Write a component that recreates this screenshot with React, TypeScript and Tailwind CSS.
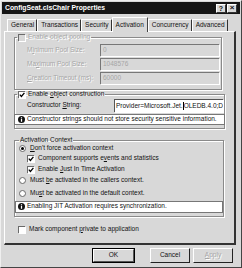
import React from 'react';

function Check({ checked = false, disabled = false }: { checked?: boolean; disabled?: boolean }) {
  return (
    <span
      className={`w-[7px] h-[7px] shrink-0 border-t border-l border-[#6a6a6a] shadow-[1px_1px_0_#fff] flex items-center justify-center ${
        disabled ? 'bg-[#d8d8d8]' : 'bg-white'
      }`}
    >
      {checked && (
        <svg viewBox="0 0 6 6" className="w-[6px] h-[6px]">
          <path d="M0.8 2.6 L2.4 4.4 L5.4 0.8" stroke="#000" strokeWidth="1.3" fill="none" />
        </svg>
      )}
    </span>
  );
}

function Radio({ checked = false }: { checked?: boolean }) {
  return (
    <span className="w-[7px] h-[7px] shrink-0 rounded-full bg-white border border-[#6a6a6a] flex items-center justify-center">
      {checked && <span className="w-[3px] h-[3px] rounded-full bg-black" />}
    </span>
  );
}

function InfoIcon() {
  return (
    <svg viewBox="0 0 8 8" className="w-[7px] h-[7px] shrink-0">
      <circle cx="4" cy="4" r="4" fill="#111" />
      <rect x="3.3" y="1.4" width="1.4" height="1.2" fill="#fff" />
      <rect x="3.3" y="3.2" width="1.4" height="3.4" fill="#fff" />
    </svg>
  );
}

function Field({ label, value }: { label: React.ReactNode; value: string }) {
  return (
    <div className="flex items-center h-[12px] mb-[2px]">
      <span className="w-[85px] pl-[12px] text-[#a6a6a6] [text-shadow:1px_1px_0_#fff]">{label}</span>
      <div className="flex-1 h-[12px] border-t border-l border-[#777] bg-[#d8d8d8] shadow-[1px_1px_0_#fff] flex items-center pl-[2px] text-[#a6a6a6]">
        {value}
      </div>
    </div>
  );
}

const tabs = ['General', 'Transactions', 'Security', 'Activation', 'Concurrency', 'Advanced'];

export default function App() {
  return (
    <div className="w-[242px] h-[268px] bg-[#d8d8d8] border-t border-l border-[#efefef] border-r border-b border-r-[#444] border-b-[#444] flex flex-col text-[6.5px] leading-none text-[#111] font-['Liberation_Sans',Arial,sans-serif] overflow-hidden">
      {/* Title bar */}
      <div className="mx-[1px] mt-[1px] h-[12px] bg-[#161616] flex items-center justify-between pl-[3px] pr-[3px]">
        <span className="text-white font-bold text-[6.8px]">ConfigSeat.clsChair Properties</span>
        <div className="flex gap-[1px]">
          <span className="w-[10px] h-[9px] bg-[#d8d8d8] border-t border-l border-white border-r border-b border-r-[#333] border-b-[#333] flex items-center justify-center font-bold text-[7px]">?</span>
          <span className="w-[10px] h-[9px] bg-[#d8d8d8] border-t border-l border-white border-r border-b border-r-[#333] border-b-[#333] flex items-center justify-center font-bold text-[8px]">×</span>
        </div>
      </div>

      {/* Tabs */}
      <div className="flex items-end h-[16px] pl-[6px] mt-[1px]">
        {tabs.map((t) =>
          t === 'Activation' ? (
            <div
              key={t}
              className="h-[15px] pl-[3px] pr-[3px] border-t border-l border-white border-r border-r-[#444] bg-[#d8d8d8] flex items-center -mb-[1px] relative"
            >
              {t}
            </div>
          ) : (
            <div
              key={t}
              className="h-[12px] pl-[3px] pr-[2px] border-t border-l border-white border-r-[1.5px] border-r-[#333] flex items-center"
            >
              {t}
            </div>
          )
        )}
      </div>

      {/* Panel */}
      <div className="mx-[3px] w-[232px] h-[214px] border-t border-l border-white border-r-2 border-b-2 border-r-[#333] border-b-[#333] px-[9px] pt-[2px] flex flex-col">
        {/* Object pooling */}
        <fieldset className="border border-[#8a8a8a] shadow-[inset_1px_1px_0_#fff,1px_1px_0_#fff] pl-[0px] pr-[2px] pb-[3px] mr-[3px]">
          <legend className="ml-[2px] px-[1px] flex items-center gap-[3px] text-[#a6a6a6] [text-shadow:1px_1px_0_#fff]">
            <Check disabled />
            <span>Enable object pooling</span>
          </legend>
          <div className="pt-[3px]">
            <Field label={<>M<u>i</u>nimum Pool Size:</>} value="0" />
            <Field label={<>Ma<u>x</u>imum Pool Size:</>} value="1048576" />
            <Field label={<><u>C</u>reation Timeout (ms):</>} value="60000" />
          </div>
        </fieldset>

        {/* Object construction */}
        <fieldset className="mt-[1px] border border-[#8a8a8a] shadow-[inset_1px_1px_0_#fff,1px_1px_0_#fff] pb-[3px] mr-[1px]">
          <legend className="ml-[2px] px-[1px] flex items-center gap-[3px]">
            <Check checked />
            <span>
              Enable <u>o</u>bject construction
            </span>
          </legend>
          <div className="flex items-center h-[13px] mt-[1px]">
            <span className="w-[99px] pl-[12px]">
              Constructor <u>S</u>tring:
            </span>
            <div className="flex-1 h-[13px] bg-white border-t border-l border-[#555] shadow-[1px_1px_0_#fff] flex items-center pl-[1px] mr-[1px] whitespace-nowrap overflow-hidden">
              Provider=Microsoft.Jet.<span className="inline-block w-[1px] h-[8px] bg-black" />OLEDB.4.0;D
            </div>
          </div>
          <div className="mt-[2px] -mx-[1px] h-[11px] bg-white border border-[#777] flex items-center gap-[2px] pl-[3px] whitespace-nowrap">
            <InfoIcon />
            <span>Constructor strings should not store security sensitive information.</span>
          </div>
        </fieldset>

        {/* Activation context */}
        <fieldset className="mt-[8px] border border-[#8a8a8a] shadow-[inset_1px_1px_0_#fff,1px_1px_0_#fff] pb-[3px] mr-[1px]">
          <legend className="ml-[4px] px-[1px]">Activation Context</legend>
          <div className="flex flex-col pl-[4px]">
            <div className="flex items-center gap-[4px] h-[10px]">
              <Radio checked />
              <span>
                <u>D</u>on't force activation context
              </span>
            </div>
            <div className="flex items-center gap-[4px] h-[10px] pl-[8px]">
              <Check checked />
              <span>
                Component supports e<u>v</u>ents and statistics
              </span>
            </div>
            <div className="flex items-center gap-[4px] h-[11px] pl-[8px]">
              <Check checked />
              <span>
                Enable <u>J</u>ust In Time Activation
              </span>
            </div>
            <div className="flex items-center gap-[4px] h-[12px]">
              <Radio />
              <span>
                Must <u>b</u>e activated in the callers context.
              </span>
            </div>
            <div className="flex items-center gap-[4px] h-[13px]">
              <Radio />
              <span>
                Mu<u>s</u>t be activated in the default context.
              </span>
            </div>
          </div>
          <div className="mt-[1px] h-[12px] bg-white border border-[#777] flex items-center gap-[2px] pl-[2px] whitespace-nowrap">
            <InfoIcon />
            <span>Enabling JIT Activation requires synchronization.</span>
          </div>
        </fieldset>

        <div className="flex items-center gap-[4px] mt-[9px] pl-[4px]">
          <Check />
          <span>
            Mark component <u>p</u>rivate to application
          </span>
        </div>
      </div>

      {/* Buttons */}
      <div className="flex justify-end gap-[3px] pr-[8px] mt-[3px]">
        <div className="w-[43px] h-[15px] border border-black">
          <div className="w-full h-full border-t border-l border-white border-r border-b border-r-[#555] border-b-[#555] flex items-center justify-center">
            OK
          </div>
        </div>
        <div className="w-[40px] h-[15px] border-t border-l border-white border-r border-b border-r-[#222] border-b-[#222] flex items-center justify-center ml-[12px]">
          Cancel
        </div>
        <div className="w-[40px] h-[15px] border-t border-l border-white border-r border-b border-r-[#222] border-b-[#222] flex items-center justify-center text-[#a6a6a6] [text-shadow:1px_1px_0_#fff]">
          <u>A</u>pply
        </div>
      </div>
    </div>
  );
}
